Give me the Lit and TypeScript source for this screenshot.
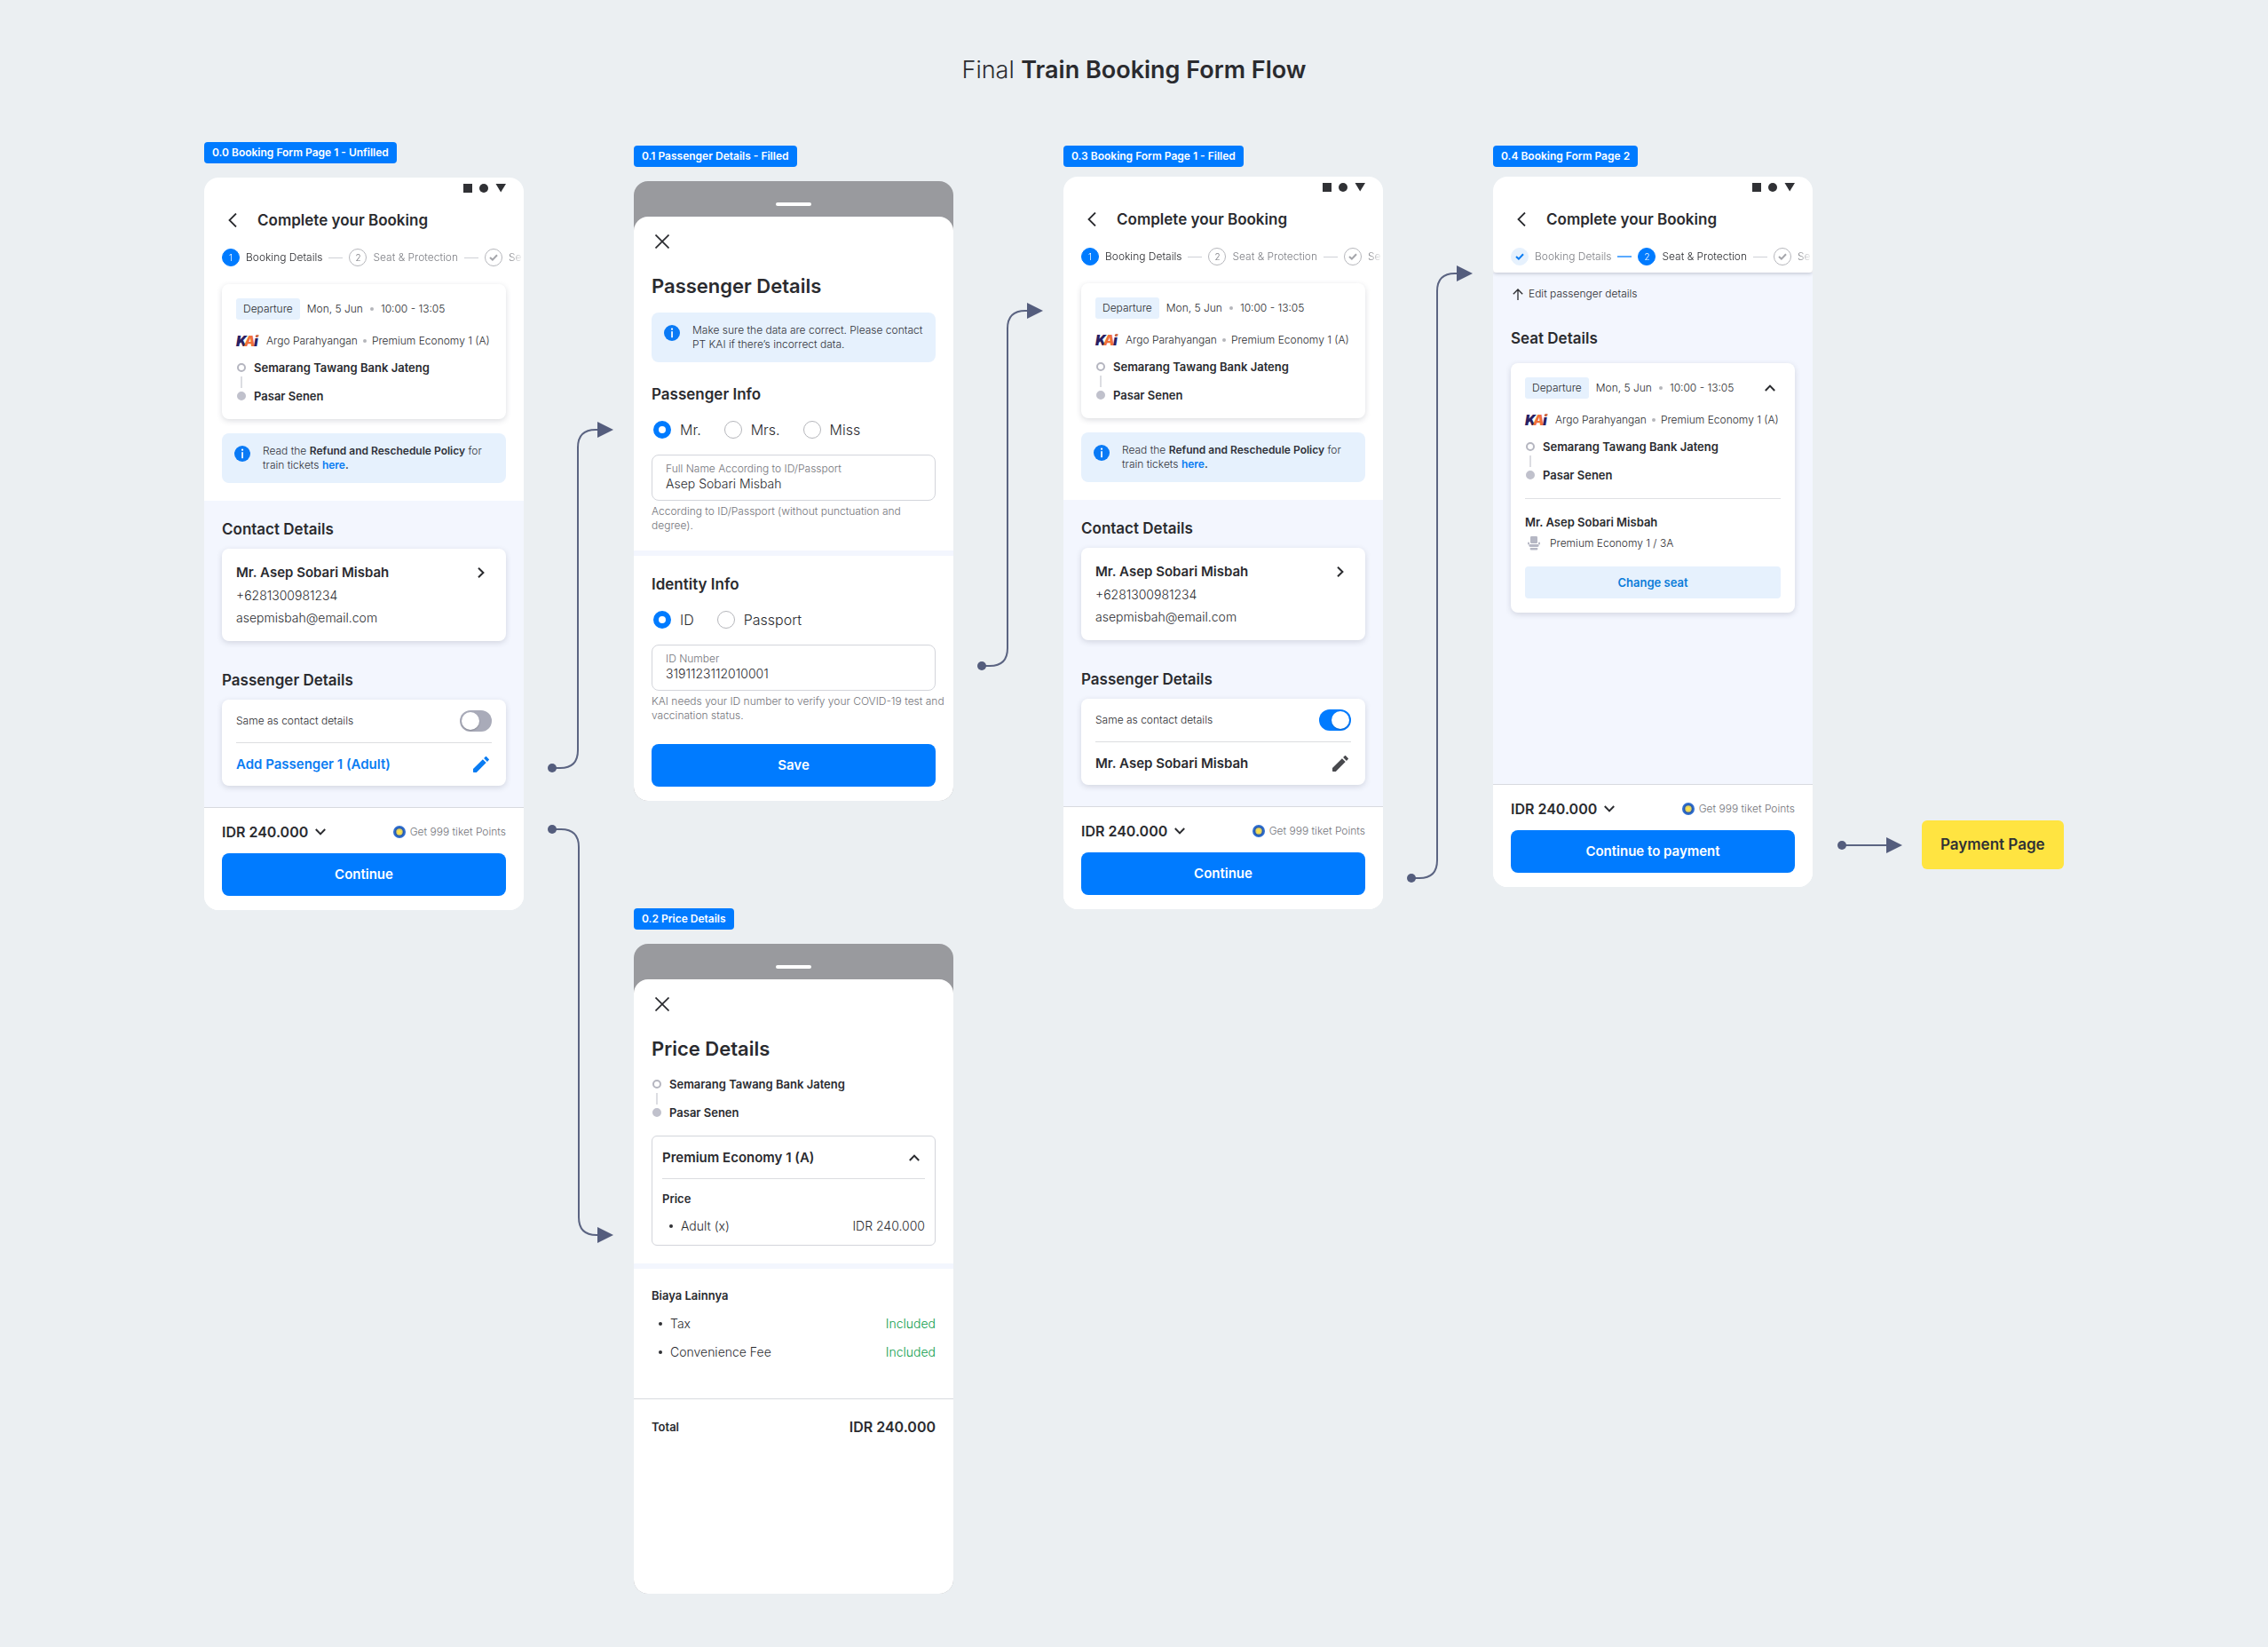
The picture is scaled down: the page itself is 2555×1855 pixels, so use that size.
import { LitElement, html, svg, css, TemplateResult } from "lit";
import { customElement } from "lit/decorators.js";
import { classMap } from "lit/directives/class-map.js";
import { styleMap } from "lit/directives/style-map.js";

interface FlowNode {
  label: string;
  x: number;
  y: number;
  snug?: boolean;
  view: () => TemplateResult;
}

interface Arrow {
  from: [number, number];
  bend: number;
  to: [number, number];
}

const ARROWS: Arrow[] = [
  { from: [622, 745], bend: 651, to: [691, 364] },
  { from: [622, 814], bend: 652, to: [691, 1271] },
  { from: [1106, 630], bend: 1135, to: [1175, 230] },
  { from: [1590, 869], bend: 1619, to: [1659, 188] },
  { from: [2075, 832], bend: 0, to: [2143, 832] },
];

function arrowPath({ from: [x1, y1], bend, to: [x2, y2] }: Arrow): string {
  if (y1 === y2) return `M${x1} ${y1}H${x2 - 18}`;
  const r = 20;
  const dir = y2 > y1 ? 1 : -1;
  return (
    `M${x1} ${y1}H${bend - r}Q${bend} ${y1} ${bend} ${y1 + dir * r}` +
    `V${y2 - dir * r}Q${bend} ${y2} ${bend + r} ${y2}H${x2 - 18}`
  );
}

const iconBack = svg`<svg class="icon" width="10" height="16" viewBox="0 0 10 16"><path d="M9 0.5L1.5 8L9 15.5" fill="none" stroke="currentColor" stroke-width="1.8"/></svg>`;
const iconClose = svg`<svg class="icon" width="16" height="16" viewBox="0 0 16 16"><path d="M0.5 0.5L15.5 15.5M15.5 0.5L0.5 15.5" fill="none" stroke="currentColor" stroke-width="1.7"/></svg>`;
const iconDown = svg`<svg class="icon" width="12" height="8" viewBox="0 0 12 8"><path d="M0.8 1L6 6.4L11.2 1" fill="none" stroke="currentColor" stroke-width="2"/></svg>`;
const iconUp = svg`<svg class="icon" width="12" height="8" viewBox="0 0 12 8"><path d="M0.8 7L6 1.6L11.2 7" fill="none" stroke="currentColor" stroke-width="2"/></svg>`;
const iconRight = svg`<svg class="icon" width="8" height="12" viewBox="0 0 8 12"><path d="M1 0.8L6.4 6L1 11.2" fill="none" stroke="currentColor" stroke-width="2"/></svg>`;
const iconArrowUp = svg`<svg class="icon" width="12" height="13" viewBox="0 0 12 13"><path d="M6 13V1M0.8 6.2L6 1L11.2 6.2" fill="none" stroke="currentColor" stroke-width="1.3"/></svg>`;
const iconPencil = svg`<svg class="icon" width="18" height="18" viewBox="0 0 18 18"><path d="M0 14.1L10.9 3.3L14.7 7.1L3.8 18H0.6L0 17.4ZM12.1 2.1L13.9 0.3C14.3 -0.1 14.7 -0.1 15.1 0.3L17.7 2.9C18.1 3.3 18.1 3.7 17.7 4.1L15.9 5.9Z" fill="currentColor"/></svg>`;
const iconInfo = svg`<svg class="icon info-icon" width="18" height="18" viewBox="0 0 18 18"><circle cx="9" cy="9" r="9" fill="#0a7af5"/><rect x="8.2" y="7.2" width="1.7" height="7" fill="#fff"/><circle cx="9.05" cy="4.7" r="1.1" fill="#fff"/></svg>`;
const iconCheck = svg`<svg class="icon" width="10" height="8" viewBox="0 0 10 8"><path d="M1 3.9L3.9 6.6L9 1.2" fill="none" stroke="currentColor" stroke-width="2"/></svg>`;
const iconSeat = svg`<svg class="icon" width="14" height="16" viewBox="0 0 14 16"><g fill="#b5b7c4"><rect x="3" y="0" width="8" height="8" rx="1.2"/><rect x="0" y="6.6" width="2" height="3" rx="1"/><rect x="12" y="6.6" width="2" height="3" rx="1"/><rect x="1.4" y="9" width="11.2" height="3" rx="1.4"/><rect x="2.6" y="13" width="8.8" height="2.4" rx="1.1"/></g></svg>`;
const iconPoints = svg`<svg class="icon" width="14" height="14" viewBox="0 0 14 14"><circle cx="7" cy="7" r="7" fill="#2f6fd0"/><circle cx="7" cy="7" r="5.2" fill="#2a58a8"/><circle cx="7" cy="7" r="3.7" fill="#d9cf6a"/><path d="M7 3.8L8 5.8L10.2 6.1L8.6 7.6L9 9.8L7 8.8L5 9.8L5.4 7.6L3.8 6.1L6 5.8Z" fill="#ffe04a"/></svg>`;
const iconKai = svg`<svg class="icon kai" width="26" height="14" viewBox="0 0 26 14" role="img" aria-label="KAI"><text x="0" y="13" fill="#2a2062">K</text><text x="9" y="13" fill="#f0713a">A</text><text x="20" y="13" fill="#2a2062">i</text><path d="M22.6 0.4L25.6 0L24.9 2.6L22.2 2.8Z" fill="#f0713a"/></svg>`;

@customElement("app-root")
export class AppRoot extends LitElement {
  static styles = css`
    :host {
      display: block;
      min-height: 100vh;
      background: #ebeff2;
      color: #2a2b2f;
      font-family: Inter, "Liberation Sans", sans-serif;
      font-size: 12px;
      font-weight: 350;
      line-height: 16px;
    }
    *, *::before, *::after { box-sizing: border-box; }
    h1, h2, h3, p, ol, ul, dl, dd, dt { margin: 0; padding: 0; font: inherit; }
    ol, ul { list-style: none; }
    button { font: inherit; color: inherit; background: none; border: 0; padding: 0; cursor: pointer; }
    a { color: #0a7cf2; text-decoration: none; font-weight: 600; }
    .icon { display: block; flex: none; }
    .kai { overflow: visible; }
    .kai text { font: italic 900 16px Inter, sans-serif; }

    .page-title { padding: 57px 0 19px; text-align: center; font-size: 27px; line-height: 44px; font-weight: 300; }
    .page-title strong { font-weight: 600; }
    .board { position: relative; min-height: 1735px; }
    .arrows { position: absolute; inset: 0; width: 100%; height: 100%; overflow: visible; pointer-events: none; }
    .arrow-line { fill: none; stroke: #5b6482; stroke-width: 2; }
    .arrow-fill { fill: #545d7d; }

    .node { position: absolute; width: 360px; display: flex; flex-direction: column; align-items: flex-start; gap: 16px; }
    .node.snug { gap: 11px; }
    .tag { background: #007bff; color: #fff; font-size: 12px; font-weight: 600; line-height: 24px; padding: 0 9px; border-radius: 4px; }
    .payment { position: absolute; left: 2165px; top: 804px; padding: 0 21px; border-radius: 6px; background: #ffe441; color: #303135; font-size: 17px; font-weight: 600; line-height: 55px; }

    .screen { width: 100%; border-radius: 16px; overflow: hidden; background: #fff; display: flex; flex-direction: column; }
    .screen.tall { min-height: 800px; }
    .statusbar { height: 24px; padding: 0 20px; display: flex; justify-content: flex-end; align-items: center; gap: 8px; }
    .appbar { height: 48px; padding: 0 20px; display: flex; align-items: center; gap: 16px; font-size: 17px; font-weight: 600; line-height: 24px; }
    .back { width: 24px; height: 24px; display: grid; place-items: center; }
    .steps { height: 36px; padding-left: 20px; display: flex; align-items: center; gap: 7px; white-space: nowrap; overflow: hidden; mask-image: linear-gradient(to right, #000 344px, transparent 360px); }
    .step { display: flex; align-items: center; gap: 7px; color: #7f8086; flex: none; }
    .step + .step::before { content: ""; width: 16px; height: 1px; background: #cfd1d6; }
    .step.reached + .step::before { background: #5aaaff; height: 2px; }
    .step.current { color: #2a2b2f; }
    .bullet { width: 20px; height: 20px; border-radius: 50%; border: 1px solid #b5b6bb; display: grid; place-items: center; font-size: 10px; line-height: 18px; color: #77787e; }
    .step.current .bullet { background: #007bff; border-color: #007bff; color: #fff; }
    .step.reached .bullet { background: #e6f1fd; border-color: #e6f1fd; color: #0a7cf2; }
    .step.last .bullet { color: #a5a6ab; }

    .intro { padding: 12px 20px 20px; display: flex; flex-direction: column; gap: 16px; }
    .card { background: #fff; border-radius: 8px; padding: 16px; box-shadow: 0 2px 6px rgba(60, 66, 90, 0.18); }
    .trip-top { display: flex; align-items: center; gap: 8px; line-height: 24px; }
    .chip { background: #e6f1fd; border-radius: 3px; padding: 0 8px; }
    .with-dot { display: flex; align-items: center; gap: 8px; white-space: nowrap; }
    .dot { width: 4px; height: 4px; border-radius: 50%; background: #b5b6bb; }
    .trip-top .toggle-trip { margin-left: auto; width: 24px; height: 24px; display: grid; place-items: center; }
    .train { margin-top: 16px; display: flex; align-items: center; gap: 8px; white-space: nowrap; }
    .train .with-dot { gap: 6px; }
    .stations { margin-top: 12px; display: flex; flex-direction: column; gap: 12px; }
    .station { display: flex; align-items: center; gap: 8px; font-size: 13px; font-weight: 600; line-height: 20px; }
    .pin { width: 12px; height: 20px; display: flex; flex-direction: column; justify-content: center; position: relative; }
    .pin::before { content: ""; width: 10px; height: 10px; margin: 0 auto; border-radius: 50%; border: 2px solid #b5b6c0; }
    .station:last-child .pin::before { background: #c0c1cc; border-color: #c0c1cc; }
    .station:first-child .pin::after { content: ""; position: absolute; left: 5px; top: 20px; width: 2px; height: 13px; background: #dcdde2; }

    .notice { display: flex; gap: 14px; padding: 12px 14px; background: #e6f1fd; border-radius: 8px; color: #30323a; white-space: nowrap; }
    .notice strong { font-weight: 600; }
    .info-icon { margin-top: 2px; }

    .tinted { background: #f3f6fe; padding: 20px 20px 24px; display: flex; flex-direction: column; gap: 32px; }
    .block { display: flex; flex-direction: column; gap: 10px; }
    .heading { font-size: 17px; font-weight: 600; line-height: 24px; }
    .contact { display: flex; flex-direction: column; gap: 5px; font-size: 14px; line-height: 20px; }
    .name { font-size: 15px; font-weight: 600; line-height: 22px; }
    .row { display: flex; align-items: center; justify-content: space-between; }
    .contact .row { padding-right: 8px; }
    .passenger { padding: 12px 16px 0; }
    .same { padding-bottom: 12px; border-bottom: 1px solid #dcdde0; }
    .edit { width: 100%; height: 48px; padding-right: 3px; }
    .edit .icon { color: #48494d; }
    .edit.add, .edit.add .icon { color: #0a7cf2; }
    .switch { appearance: none; margin: 0; width: 36px; height: 24px; border-radius: 12px; background: #a9abb9; display: flex; align-items: center; padding: 2px; cursor: pointer; }
    .switch::before { content: ""; width: 20px; height: 20px; border-radius: 50%; background: #fff; box-shadow: 0 1px 2px rgba(0, 0, 0, 0.2); }
    .switch:checked { background: #007bff; justify-content: flex-end; }

    .footer { border-top: 1px solid #d8dadf; padding: 15px 20px 16px; display: flex; flex-direction: column; gap: 12px; background: #fff; }
    .total { display: flex; align-items: center; gap: 8px; font-size: 16px; font-weight: 600; line-height: 24px; }
    .points { display: flex; align-items: center; gap: 5px; color: #74757b; }
    .primary { width: 100%; height: 48px; border-radius: 8px; background: #007bff; color: #fff; font-size: 15px; font-weight: 600; }

    .shaded { box-shadow: 0 1px 4px rgba(60, 66, 90, 0.3); border-radius: 0 0 4px 4px; z-index: 1; }
    .seats { flex: 1; background: #f3f6fe; padding: 14px 20px; display: flex; flex-direction: column; align-items: stretch; }
    .to-passenger { display: flex; align-items: center; gap: 6px; line-height: 20px; padding-left: 2px; }
    .seats .heading { margin: 28px 0 16px; }
    .seat-info { margin-top: 16px; padding-top: 16px; border-top: 1px solid #e0e1e4; display: flex; flex-direction: column; }
    .seat-name { font-size: 13px; font-weight: 600; line-height: 20px; }
    .seat { margin: 4px 0 16px; display: flex; align-items: center; gap: 11px; padding-left: 3px; line-height: 20px; }
    .secondary { height: 36px; border-radius: 4px; background: #e6f1fd; color: #0a7cd9; font-size: 13px; font-weight: 600; }

    .modal { background: #999a9e; }
    .grip { height: 40px; display: grid; align-items: center; justify-items: center; padding-top: 12px; }
    .grip::before { content: ""; width: 40px; height: 4px; border-radius: 2px; background: #fff; }
    .sheet { flex: 1; background: #fff; border-radius: 16px 16px 0 0; display: flex; flex-direction: column; }
    .price-sheet { min-height: 692px; }
    .part { padding: 16px 20px 20px; display: flex; flex-direction: column; }
    .part + .part { border-top: 6px solid #f3f6fe; padding: 20px 20px 16px; }
    .close { width: 24px; height: 24px; display: grid; place-items: center; margin-bottom: 24px; }
    .sheet-title { font-size: 22px; font-weight: 600; line-height: 28px; margin-bottom: 16px; }
    .notice + .heading { margin-top: 24px; }
    .choices { border: 0; margin: 16px 0; padding: 0; display: flex; gap: 24px; font-size: 16px; line-height: 24px; }
    .choice { display: flex; align-items: center; gap: 10px; padding-left: 2px; }
    .radio { appearance: none; margin: 0; width: 20px; height: 20px; border-radius: 50%; border: 1px solid #b5b6bb; background: #fff; }
    .radio:checked { border: 6px solid #007bff; }
    .field { height: 52px; border: 1px solid #d3d5db; border-radius: 8px; padding: 7px 15px; display: flex; flex-direction: column; color: #74757b; }
    .field input { border: 0; padding: 0; outline: 0; background: none; width: 100%; height: 18px; font: inherit; font-size: 14px; line-height: 18px; color: #2a2b2f; }
    .help { margin-top: 4px; color: #74757b; white-space: nowrap; }
    .save { margin-top: 24px; }

    .sheet .stations { margin: 0 0 16px; }
    .fare { border: 1px solid #d3d5db; border-radius: 6px; padding: 0 11px 11px; font-size: 14px; line-height: 20px; }
    .fare-head { width: 100%; height: 48px; padding-right: 6px; border-bottom: 1px solid #dcdde0; margin-bottom: 12px; }
    .label { font-size: 13px; font-weight: 600; line-height: 20px; }
    .lines { padding-left: 8px; display: flex; flex-direction: column; gap: 12px; margin-top: 12px; font-size: 14px; line-height: 20px; }
    .fare .lines { margin-top: 11px; }
    .line-name { display: flex; align-items: center; gap: 9px; }
    .line-name::before { content: ""; width: 4px; height: 4px; border-radius: 50%; background: #303135; }
    .included { color: #0f9d4c; }
    .part.fees { padding-bottom: 42px; }
    .sum { border-top: 1px solid #d8dadf; padding: 19px 20px; }
    .sum .amount { font-size: 16px; font-weight: 600; line-height: 24px; }
  `;

  private nodes: FlowNode[] = [
    { label: "0.0 Booking Form Page 1 - Unfilled", x: 230, y: 40, view: () => this.bookingPage(false) },
    { label: "0.1 Passenger Details - Filled", x: 714, y: 44, view: () => this.passengerSheet() },
    { label: "0.2 Price Details", x: 714, y: 903, view: () => this.priceSheet() },
    { label: "0.3 Booking Form Page 1 - Filled", x: 1198, y: 44, snug: true, view: () => this.bookingPage(true) },
    { label: "0.4 Booking Form Page 2", x: 1682, y: 44, snug: true, view: () => this.seatPage() },
  ];

  private pageHeader(current: number) {
    return html`
      <div class="statusbar">
        ${svg`<svg class="icon" width="48" height="10" viewBox="0 0 48 10" fill="#303135"><rect width="10" height="10"/><circle cx="23" cy="5" r="5"/><path d="M36.500 0H48L42.200 9.600Z"/></svg>`}
      </div>
      <header class="appbar">
        <button class="back" aria-label="Back">${iconBack}</button>
        <h2>Complete your Booking</h2>
      </header>
      <ol class="steps">
        <li class=${classMap({ step: true, current: current === 1, reached: current > 1 })}>
          <span class="bullet">${current > 1 ? iconCheck : "1"}</span>Booking Details
        </li>
        <li class=${classMap({ step: true, current: current === 2 })}>
          <span class="bullet">2</span>Seat &amp; Protection
        </li>
        <li class="step last"><span class="bullet">${iconCheck}</span>Se</li>
      </ol>
    `;
  }

  private stations() {
    return html`
      <ul class="stations">
        ${["Semarang Tawang Bank Jateng", "Pasar Senen"].map(
          (name) => html`<li class="station"><span class="pin"></span>${name}</li>`
        )}
      </ul>
    `;
  }

  private trip(expandable = false) {
    return html`
      <div class="trip-top">
        <span class="chip">Departure</span>
        <span class="with-dot">Mon, 5 Jun<i class="dot"></i>10:00 - 13:05</span>
        ${expandable
          ? html`<button class="toggle-trip" aria-label="Collapse">${iconUp}</button>`
          : null}
      </div>
      <div class="train">
        ${iconKai}
        <span class="with-dot">Argo Parahyangan<i class="dot"></i>Premium Economy 1 (A)</span>
      </div>
      ${this.stations()}
    `;
  }

  private footer(action: string) {
    return html`
      <footer class="footer">
        <div class="row">
          <button class="total">IDR 240.000 ${iconDown}</button>
          <span class="points">${iconPoints}Get 999 tiket Points</span>
        </div>
        <button class="primary">${action}</button>
      </footer>
    `;
  }

  private bookingPage(filled: boolean) {
    return html`
      <article class="screen">
        ${this.pageHeader(1)}
        <section class="intro">
          <div class="card">${this.trip()}</div>
          <div class="notice">
            ${iconInfo}
            <p>
              Read the <strong>Refund and Reschedule Policy</strong> for<br />train tickets
              <a href="#policy">here</a><strong>.</strong>
            </p>
          </div>
        </section>
        <div class="tinted">
          <section class="block">
            <h3 class="heading">Contact Details</h3>
            <div class="card contact">
              <div class="row">
                <span class="name">Mr. Asep Sobari Misbah</span>
                <button aria-label="Open contact">${iconRight}</button>
              </div>
              <span>+6281300981234</span>
              <span>asepmisbah@email.com</span>
            </div>
          </section>
          <section class="block">
            <h3 class="heading">Passenger Details</h3>
            <div class="card passenger">
              <label class="row same">
                Same as contact details
                <input class="switch" type="checkbox" role="switch" .checked=${filled} />
              </label>
              <button class=${classMap({ row: true, edit: true, name: true, add: !filled })}>
                ${filled ? "Mr. Asep Sobari Misbah" : "Add Passenger 1 (Adult)"} ${iconPencil}
              </button>
            </div>
          </section>
        </div>
        ${this.footer("Continue")}
      </article>
    `;
  }

  private seatPage() {
    return html`
      <article class="screen tall">
        <div class="shaded">${this.pageHeader(2)}</div>
        <section class="seats">
          <button class="to-passenger">${iconArrowUp}Edit passenger details</button>
          <h3 class="heading">Seat Details</h3>
          <div class="card">
            ${this.trip(true)}
            <div class="seat-info">
              <span class="seat-name">Mr. Asep Sobari Misbah</span>
              <span class="seat">${iconSeat}Premium Economy 1 / 3A</span>
              <button class="secondary">Change seat</button>
            </div>
          </div>
        </section>
        ${this.footer("Continue to payment")}
      </article>
    `;
  }

  private choices(group: string, options: string[]) {
    return html`
      <fieldset class="choices" aria-label=${group}>
        ${options.map(
          (option, i) => html`<label class="choice">
            <input class="radio" type="radio" name=${group} .checked=${i === 0} />${option}
          </label>`
        )}
      </fieldset>
    `;
  }

  private passengerSheet() {
    return html`
      <article class="screen modal">
        <div class="grip"></div>
        <form class="sheet" @submit=${(e: Event) => e.preventDefault()}>
          <section class="part">
            <button class="close" type="button" aria-label="Close">${iconClose}</button>
            <h2 class="sheet-title">Passenger Details</h2>
            <div class="notice">
              ${iconInfo}
              <p>Make sure the data are correct. Please contact<br />PT KAI if there’s incorrect data.</p>
            </div>
            <h3 class="heading">Passenger Info</h3>
            ${this.choices("title", ["Mr.", "Mrs.", "Miss"])}
            <label class="field">
              Full Name According to ID/Passport
              <input type="text" .value=${"Asep Sobari Misbah"} />
            </label>
            <p class="help">According to ID/Passport (without punctuation and<br />degree).</p>
          </section>
          <section class="part">
            <h3 class="heading">Identity Info</h3>
            ${this.choices("identity", ["ID", "Passport"])}
            <label class="field">
              ID Number
              <input type="text" .value=${"3191123112010001"} />
            </label>
            <p class="help">KAI needs your ID number to verify your COVID-19 test and<br />vaccination status.</p>
            <button class="primary save">Save</button>
          </section>
        </form>
      </article>
    `;
  }

  private priceSheet() {
    return html`
      <article class="screen modal">
        <div class="grip"></div>
        <div class="sheet price-sheet">
          <section class="part">
            <button class="close" aria-label="Close">${iconClose}</button>
            <h2 class="sheet-title">Price Details</h2>
            ${this.stations()}
            <div class="fare">
              <button class="row fare-head name">Premium Economy 1 (A) ${iconUp}</button>
              <h3 class="label">Price</h3>
              <dl class="lines">
                <div class="row"><dt class="line-name">Adult (x)</dt><dd>IDR 240.000</dd></div>
              </dl>
            </div>
          </section>
          <section class="part fees">
            <h3 class="label">Biaya Lainnya</h3>
            <dl class="lines">
              ${["Tax", "Convenience Fee"].map(
                (fee) => html`<div class="row">
                  <dt class="line-name">${fee}</dt>
                  <dd class="included">Included</dd>
                </div>`
              )}
            </dl>
          </section>
          <div class="row sum">
            <span class="label">Total</span>
            <span class="amount">IDR 240.000</span>
          </div>
        </div>
      </article>
    `;
  }

  render() {
    return html`
      <h1 class="page-title">Final <strong>Train Booking Form Flow</strong></h1>
      <main class="board">
        <svg class="arrows" aria-hidden="true">
          ${ARROWS.map(
            (a) => svg`
              <path class="arrow-line" d=${arrowPath(a)} />
              <circle class="arrow-fill" cx=${a.from[0]} cy=${a.from[1]} r="5" />
              <path class="arrow-fill" d=${`M${a.to[0] - 18} ${a.to[1] - 9}L${a.to[0]} ${a.to[1]}L${a.to[0] - 18} ${a.to[1] + 9}Z`} />
            `
          )}
        </svg>
        ${this.nodes.map(
          (n) => html`
            <section
              class=${classMap({ node: true, snug: !!n.snug })}
              style=${styleMap({ left: `${n.x}px`, top: `${n.y}px` })}
            >
              <span class="tag">${n.label}</span>
              ${n.view()}
            </section>
          `
        )}
        <span class="payment">Payment Page</span>
      </main>
    `;
  }
}
